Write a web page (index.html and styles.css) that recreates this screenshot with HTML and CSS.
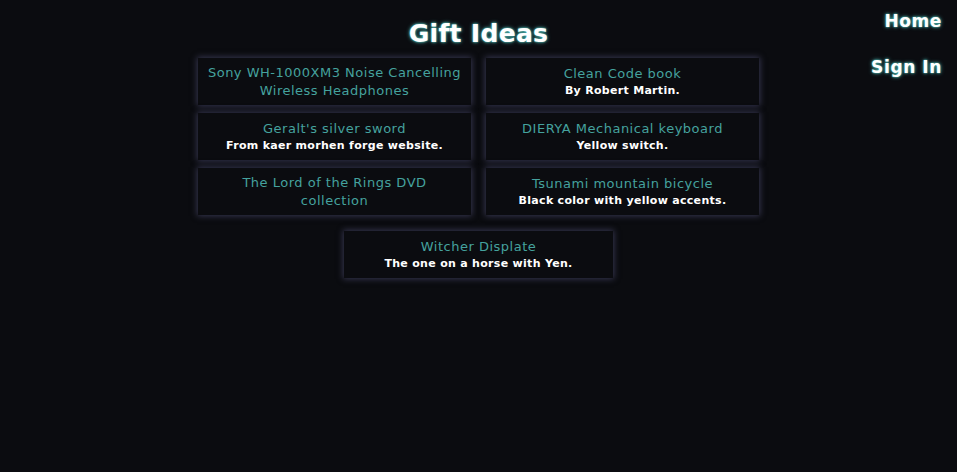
FILE: index.html
```html
<!DOCTYPE html>
<html lang="en">
<head>
<meta charset="utf-8">
<title>Gift Ideas</title>
<link rel="stylesheet" href="styles.css">
</head>
<body>
<div class="page">
  <div class="spacer"></div>
  <main class="main">
    <h1 class="title">Gift Ideas</h1>
    <div class="grid">
      <div class="card"><div class="card-title">Sony WH-1000XM3 Noise Cancelling Wireless Headphones</div></div>
      <div class="card"><div class="card-title">Clean Code book</div><div class="card-desc">By Robert Martin.</div></div>
      <div class="card"><div class="card-title">Geralt's silver sword</div><div class="card-desc">From kaer morhen forge website.</div></div>
      <div class="card"><div class="card-title">DIERYA Mechanical keyboard</div><div class="card-desc">Yellow switch.</div></div>
      <div class="card"><div class="card-title">The Lord of the Rings DVD collection</div></div>
      <div class="card"><div class="card-title">Tsunami mountain bicycle</div><div class="card-desc">Black color with yellow accents.</div></div>
    </div>
    <div class="last-row">
      <div class="card card-wide"><div class="card-title">Witcher Displate</div><div class="card-desc">The one on a horse with Yen.</div></div>
    </div>
  </main>
  <nav class="nav">
    <a class="nav-link" href="#">Home</a>
    <a class="nav-link" href="#">Sign In</a>
  </nav>
</div>
</body>
</html>
```

FILE: styles.css
```css
* { box-sizing: border-box; }
html, body { margin: 0; padding: 0; }
body {
  background: #0b0c10;
  width: 957px;
  height: 472px;
  font-family: "DejaVu Sans", sans-serif;
  color: #fff;
  overflow: hidden;
}
.page {
  display: grid;
  grid-template-columns: 1fr 561px 1fr;
}
.main {
  display: flex;
  flex-direction: column;
  align-items: center;
}
.title {
  margin: 19px 0 0;
  height: 39px;
  font-size: 25px;
  line-height: 30px;
  font-weight: bold;
  color: #fff;
  text-shadow: 0 0 4px #45a29e, 0 0 2px #66fcf1;
  letter-spacing: 0.3px;
}
.grid {
  display: grid;
  grid-template-columns: 273px 273px;
  column-gap: 15px;
  row-gap: 8px;
  width: 561px;
}
.card {
  height: 47px;
  background: #0b0c10;
  box-shadow: 0 0 6px 1px rgba(90, 88, 130, 0.55);
  display: flex;
  flex-direction: column;
  align-items: center;
  justify-content: center;
  text-align: center;
  padding: 0 9px;
}
.card-title {
  color: #45a29e;
  font-size: 13px;
  line-height: 18px;
  letter-spacing: 0.5px;
}
.card-desc {
  color: #fff;
  font-size: 11px;
  line-height: 16px;
  font-weight: bold;
  letter-spacing: 0.3px;
}
.last-row {
  margin-top: 16px;
  display: flex;
  justify-content: center;
}
.card-wide { width: 269px; }
.nav {
  display: flex;
  flex-direction: column;
  align-items: flex-end;
  gap: 22px;
  padding: 9px 15px 0 0;
}
.nav-link {
  color: #fff;
  text-decoration: none;
  font-size: 17px;
  line-height: 24px;
  font-weight: bold;
  letter-spacing: 0.6px;
  text-shadow: 0 0 4px #45a29e, 0 0 2px #66fcf1;
}
```
